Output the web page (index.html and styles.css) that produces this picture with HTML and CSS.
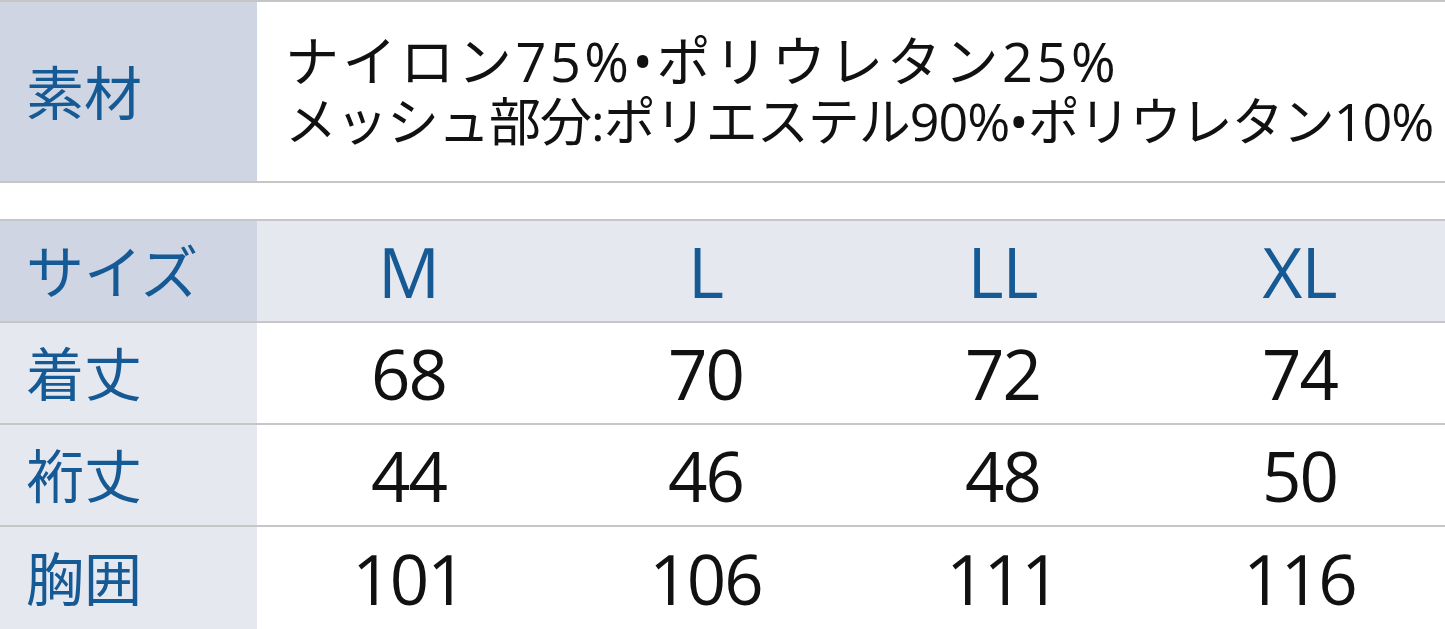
FILE: index.html
```html
<!DOCTYPE html>
<html lang="ja">
<head>
<meta charset="utf-8">
<title>サイズ表</title>
<link rel="stylesheet" href="styles.css">
</head>
<body>
<div class="sheet">
  <div class="material">
    <div class="label label-dark">素材</div>
    <div class="material-text">
      <div class="line line-wide">ナイロン75%•ポリウレタン25%</div>
      <div class="line line-tight">メッシュ部分:ポリエステル90%•ポリウレタン10%</div>
    </div>
  </div>

  <div class="sizes">
    <div class="row head">
      <div class="label label-dark">サイズ</div>
      <div class="cell size">M</div>
      <div class="cell size">L</div>
      <div class="cell size">LL</div>
      <div class="cell size">XL</div>
    </div>
    <div class="row">
      <div class="label label-light">着丈</div>
      <div class="cell">68</div>
      <div class="cell">70</div>
      <div class="cell">72</div>
      <div class="cell">74</div>
    </div>
    <div class="row">
      <div class="label label-light">裄丈</div>
      <div class="cell">44</div>
      <div class="cell">46</div>
      <div class="cell">48</div>
      <div class="cell">50</div>
    </div>
    <div class="row last">
      <div class="label label-light">胸囲</div>
      <div class="cell">101</div>
      <div class="cell">106</div>
      <div class="cell">111</div>
      <div class="cell">116</div>
    </div>
  </div>
</div>
</body>
</html>
```

FILE: styles.css
```css
html, body {
  margin: 0;
  padding: 0;
  background: #ffffff;
}

.sheet {
  width: 1445px;
  height: 629px;
  overflow: hidden;
  font-family: "Noto Sans CJK JP", sans-serif;
}

.material {
  display: grid;
  grid-template-columns: 257px 1fr;
  height: 179px;
  border-top: 2px solid #c6c6c6;
  border-bottom: 2px solid #c6c6c6;
}

.label {
  display: flex;
  align-items: center;
  padding-left: 26px;
  padding-bottom: 4px;
  font-size: 58px;
  color: #155a94;
  line-height: 1;
}

.label-dark {
  background: #d0d5e3;
}

.label-light {
  background: #e6e8f0;
}

.material-text {
  display: flex;
  flex-direction: column;
  justify-content: center;
  padding-left: 28px;
  padding-bottom: 2px;
  font-family: "Open Sans", "Noto Sans CJK JP", sans-serif;
  color: #111111;
  white-space: nowrap;
}

.line {
  height: 60px;
  line-height: 60px;
}

.line-wide {
  font-size: 54px;
  letter-spacing: 3.6px;
}

.line-tight {
  font-size: 52px;
  letter-spacing: -1px;
}

.sizes {
  margin-top: 36px;
  border-top: 2px solid #c6c6c6;
}

.row {
  display: grid;
  grid-template-columns: 257px repeat(4, 1fr);
  height: 100px;
  border-bottom: 2px solid #c6c6c6;
}

.row.last {
  border-bottom: none;
  height: 102px;
}

.head {
  background: #e6e8f0;
}

.cell {
  display: flex;
  align-items: center;
  justify-content: center;
  padding-left: 6px;
  font-family: "Open Sans", sans-serif;
  font-size: 69px;
  letter-spacing: -2px;
  line-height: 1;
  color: #111111;
}

.cell.size {
  color: #155a94;
  letter-spacing: -1px;
}
```
